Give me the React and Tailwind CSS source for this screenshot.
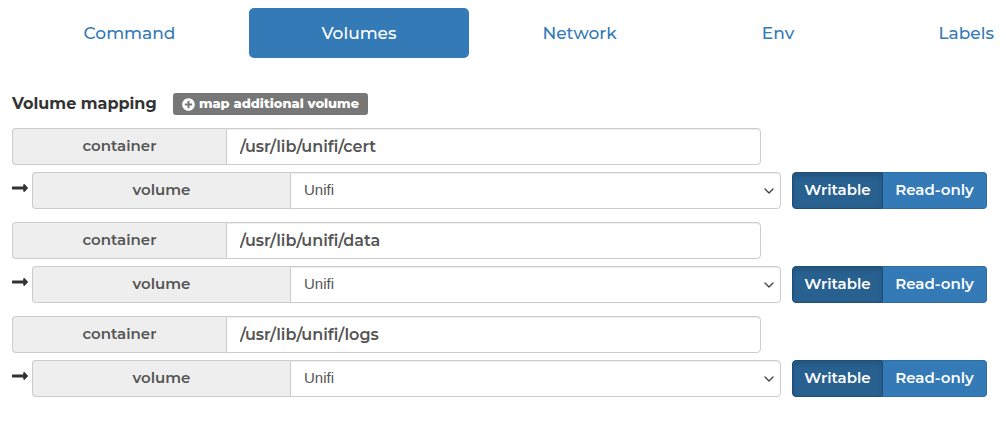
import React, { useState } from 'react';
import { ChevronDown } from 'lucide-react';
import { FaPlusCircle, FaLongArrowAltRight } from 'react-icons/fa';

const tabs = ['Command', 'Volumes', 'Network', 'Env'];

const volumes = ['Unifi'];

const initialMappings = [
  { id: 1, container: '/usr/lib/unifi/cert', volume: 'Unifi', writable: true },
  { id: 2, container: '/usr/lib/unifi/data', volume: 'Unifi', writable: true },
  { id: 3, container: '/usr/lib/unifi/logs', volume: 'Unifi', writable: true }
];

const Tab = ({ name, active, onSelect, className = 'text-center' }) => (
  <li>
    <a
      href={`#${name.toLowerCase()}`}
      aria-current={active ? 'page' : undefined}
      onClick={() => onSelect(name)}
      className={`block rounded-[5px] h-[50px] leading-[50px] text-[17px] font-medium ${
        active ? 'bg-[#337ab7] text-white' : 'text-[#337ab7]'
      } ${className}`}
    >
      {name}
    </a>
  </li>
);

const VolumeMapping = ({ mapping, onChange }) => {
  const containerId = `container-${mapping.id}`;
  const volumeId = `volume-${mapping.id}`;

  return (
    <div className="flex flex-col gap-[7px]">
      <div className="grid grid-cols-[214fr_535fr] h-[37px] mr-[226px]">
        <label
          htmlFor={containerId}
          className="flex items-center justify-center rounded-l border border-r-0 border-[#ccc] bg-[#eee] text-[15px] font-semibold text-[#555]"
        >
          container
        </label>
        <input
          id={containerId}
          type="text"
          value={mapping.container}
          onChange={(e) => onChange({ ...mapping, container: e.target.value })}
          className="min-w-0 rounded-r border border-[#ccc] bg-white px-[13px] text-base font-semibold text-[#555] shadow-[inset_0_1px_1px_rgba(0,0,0,0.075)]"
        />
      </div>

      <div className="flex h-[37px]">
        <FaLongArrowAltRight className="mr-1 h-8 w-4 shrink-0 text-[#333]" />
        <div className="grid flex-1 grid-cols-[258fr_491fr]">
          <label
            htmlFor={volumeId}
            className="flex items-center justify-center rounded-l border border-r-0 border-[#ccc] bg-[#eee] text-[15px] font-semibold text-[#555]"
          >
            volume
          </label>
          <div className="relative flex">
            <select
              id={volumeId}
              value={mapping.volume}
              onChange={(e) => onChange({ ...mapping, volume: e.target.value })}
              className="w-full appearance-none rounded-r border border-[#ccc] bg-white px-[13px] font-['Liberation_Sans',sans-serif] text-[15px] text-[#555] shadow-[inset_0_1px_1px_rgba(0,0,0,0.075)]"
            >
              {volumes.map(volume => (
                <option key={volume}>{volume}</option>
              ))}
            </select>
            <ChevronDown className="pointer-events-none absolute inset-y-0 right-1 my-auto size-4 text-[#444]" />
          </div>
        </div>
        <div className="ml-[11px] flex text-[15px] font-semibold text-white">
          <button
            type="button"
            aria-pressed={mapping.writable}
            onClick={() => onChange({ ...mapping, writable: true })}
            className={`w-[91px] rounded-l border ${
              mapping.writable
                ? 'border-[#204d74] bg-[#286090] shadow-[inset_0_3px_5px_rgba(0,0,0,0.125)]'
                : 'border-[#2e6da4] bg-[#337ab7]'
            }`}
          >
            Writable
          </button>
          <button
            type="button"
            aria-pressed={!mapping.writable}
            onClick={() => onChange({ ...mapping, writable: false })}
            className={`w-[104px] rounded-r border border-l-0 ${
              mapping.writable
                ? 'border-[#2e6da4] bg-[#337ab7]'
                : 'border-[#204d74] bg-[#286090] shadow-[inset_0_3px_5px_rgba(0,0,0,0.125)]'
            }`}
          >
            Read-only
          </button>
        </div>
      </div>
    </div>
  );
};

const App = () => {
  const [activeTab, setActiveTab] = useState('Volumes');
  const [mappings, setMappings] = useState(initialMappings);

  const updateMapping = (changed) => {
    setMappings(mappings.map(m => (m.id === changed.id ? changed : m)));
  };

  const addMapping = () => {
    setMappings([
      ...mappings,
      { id: mappings.length + 1, container: '', volume: 'Unifi', writable: true }
    ]);
  };

  return (
    <div className="min-h-screen bg-white pt-2 pl-3 font-['Montserrat','Inter',sans-serif]">
      <nav>
        <ul className="grid grid-cols-[235fr_220fr_217fr_176fr_138fr] gap-0.5">
          {tabs.map(tab => (
            <Tab key={tab} name={tab} active={tab === activeTab} onSelect={setActiveTab} />
          ))}
          <Tab
            name="Labels"
            active={activeTab === 'Labels'}
            onSelect={setActiveTab}
            className="pr-3 text-right"
          />
        </ul>
      </nav>

      <section className="pt-[35px] pr-[19px]">
        <div className="flex h-[22px] items-center">
          <h2 className="w-[161px] text-base font-bold text-[#333]">Volume mapping</h2>
          <button
            type="button"
            onClick={addMapping}
            className="flex h-[22px] w-[195px] items-center justify-center gap-1 rounded-[3px] bg-[#777] text-[13px] font-extrabold text-white"
          >
            <FaPlusCircle className="size-[13px]" />
            map additional volume
          </button>
        </div>

        <div className="mt-[13px] flex flex-col gap-[13px]">
          {mappings.map(mapping => (
            <VolumeMapping key={mapping.id} mapping={mapping} onChange={updateMapping} />
          ))}
        </div>
      </section>
    </div>
  );
};

export default App;
